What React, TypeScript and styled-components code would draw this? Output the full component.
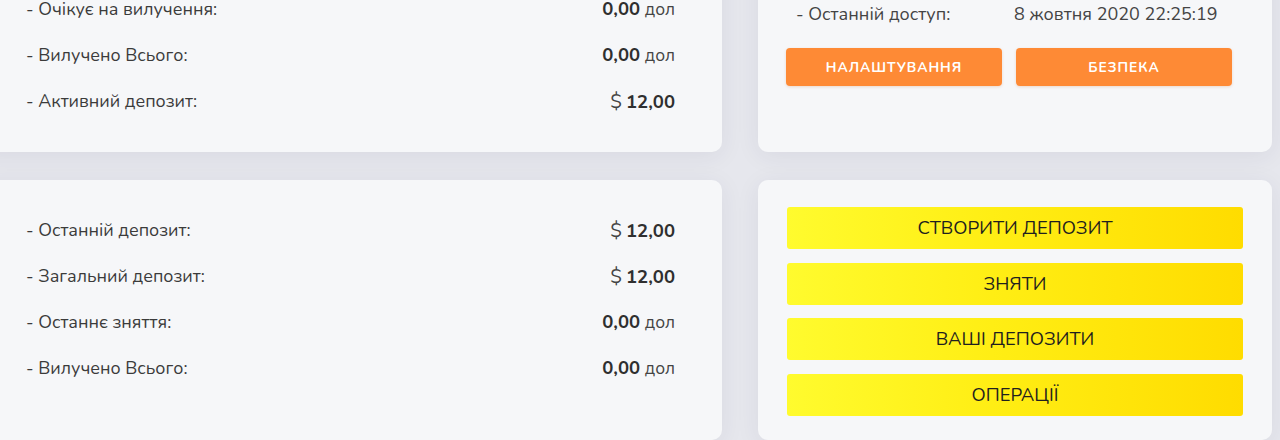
import React from "react";
import styled, { createGlobalStyle } from "styled-components";

const Global = createGlobalStyle`
  html, body { margin: 0; padding: 0; background: #e6e7ed; overflow: hidden; }
  body { font-family: "Nunito", "Open Sans", "Noto Sans", sans-serif; }
`;

const Page = styled.div`
  display: grid;
  grid-template-columns: 743px 514px;
  column-gap: 36px;
  row-gap: 28px;
  margin: -41px 0 0 -21px;
`;

const Card = styled.section`
  background: #f6f7f9;
  border-radius: 10px;
  box-shadow: 0 4px 24px rgba(40, 45, 90, 0.07);
`;

const StatCard = styled(Card)`
  padding: 27px 47px 28px 47px;
`;

const Row = styled.div`
  height: 46px;
  display: flex;
  align-items: center;
  justify-content: space-between;
  color: #3b3b3b;
  font-size: 17.9px;
`;

const Label = styled.span``;

const Value = styled.span`
  font-size: 18.5px;
  color: #333;
`;

const Strong = styled.b`
  font-weight: 700;
  color: #2f2f2f;
`;

const Unit = styled.span`
  font-size: 17.5px;
  color: #444;
`;

const Dollar = styled.span`
  font-size: 19.5px;
  color: #444;
  margin-right: 4px;
`;

const AccountCard = styled(Card)`
  padding: 41px 40px 0 28px;
  display: flex;
  flex-direction: column;
`;

const AccessRow = styled.div`
  display: grid;
  grid-template-columns: 218px 1fr;
  padding-left: 10px;
  height: 28px;
  align-items: center;
  font-size: 18px;
  color: #444;
`;

const OrangeRow = styled.div`
  display: grid;
  grid-template-columns: 1fr 1fr;
  column-gap: 14px;
  margin-top: 20px;
`;

const OrangeButton = styled.button`
  height: 38px;
  border: none;
  border-radius: 4px;
  background: #fe8a35;
  color: #fff;
  font-family: inherit;
  font-size: 13.8px;
  font-weight: 700;
  letter-spacing: 1px;
  text-transform: uppercase;
  box-shadow: 0 1px 3px rgba(200, 100, 30, 0.2);
`;

const ActionCard = styled(Card)`
  padding: 27px 29px 24px 29px;
  display: flex;
  flex-direction: column;
  gap: 13.5px;
`;

const YellowButton = styled.button`
  height: 42px;
  border: none;
  border-radius: 3px;
  background: linear-gradient(90deg, #fffb2e 0%, #ffee14 45%, #ffdc00 100%);
  color: #1f1f1f;
  font-family: inherit;
  font-size: 18.5px;
  font-weight: 400;
  text-transform: uppercase;
`;

type Stat = { label: string; kind: "usd" | "dol"; amount: string };

const topStats: Stat[] = [
  { label: "- Очікує на вилучення:", kind: "dol", amount: "0,00" },
  { label: "- Вилучено Всього:", kind: "dol", amount: "0,00" },
  { label: "- Активний депозит:", kind: "usd", amount: "12,00" },
];

const bottomStats: Stat[] = [
  { label: "- Останній депозит:", kind: "usd", amount: "12,00" },
  { label: "- Загальний депозит:", kind: "usd", amount: "12,00" },
  { label: "- Останнє зняття:", kind: "dol", amount: "0,00" },
  { label: "- Вилучено Всього:", kind: "dol", amount: "0,00" },
];

const StatRow = ({ s }: { s: Stat }) => (
  <Row>
    <Label>{s.label}</Label>
    <Value>
      {s.kind === "usd" ? (
        <>
          <Dollar>$</Dollar>
          <Strong>{s.amount}</Strong>
        </>
      ) : (
        <>
          <Strong>{s.amount}</Strong> <Unit>дол</Unit>
        </>
      )}
    </Value>
  </Row>
);

export default function App() {
  return (
    <>
      <Global />
      <Page>
        <StatCard>
          {topStats.map((s, i) => (
            <StatRow key={i} s={s} />
          ))}
        </StatCard>
        <AccountCard>
          <AccessRow>
            <span>- Останній доступ:</span>
            <span>8 жовтня 2020 22:25:19</span>
          </AccessRow>
          <OrangeRow>
            <OrangeButton>Налаштування</OrangeButton>
            <OrangeButton>Безпека</OrangeButton>
          </OrangeRow>
        </AccountCard>
        <StatCard>
          {bottomStats.map((s, i) => (
            <StatRow key={i} s={s} />
          ))}
        </StatCard>
        <ActionCard>
          <YellowButton>Створити депозит</YellowButton>
          <YellowButton>Зняти</YellowButton>
          <YellowButton>Ваші депозити</YellowButton>
          <YellowButton>Операції</YellowButton>
        </ActionCard>
      </Page>
    </>
  );
}
